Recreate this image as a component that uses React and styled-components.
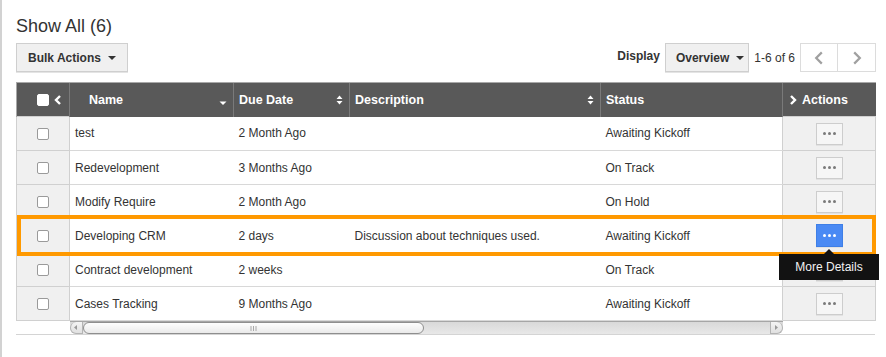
import styled, { createGlobalStyle } from "styled-components";

const GlobalStyle = createGlobalStyle`
  html, body {
    margin: 0;
    padding: 0;
    background: #fff;
  }
  body {
    font-family: "Liberation Sans", Arial, sans-serif;
    color: #333;
  }
`

const Page = styled.div`
  box-sizing: border-box;
  min-height: 357px;
  width: 886px;
  border-left: 2px solid #d2d2d2;
  padding: 16px 10px 0 14px;
`
const Title = styled.h1`
  margin: 0;
  font-size: 18px;
  line-height: 20px;
  font-weight: 400;
  color: #333;
`
const Toolbar = styled.div`
  display: flex;
  align-items: center;
  justify-content: space-between;
  margin-top: 7px;
  height: 29px;
`
const Group = styled.div`
  display: flex;
  align-items: center;
  gap: 5px;
`
const DropButton = styled.button`
  box-sizing: border-box;
  height: 29px;
  display: flex;
  align-items: center;
  gap: 7px;
  padding: 0 ${(p) => p.$pr || 11}px 0 ${(p) => p.$pl || 11}px;
  background: #f0f0f0;
  border: 1px solid #cfcfcf;
  box-shadow: 0 1px 0 #e4e4e4;
  font-family: inherit;
  font-size: 12px;
  font-weight: 700;
  color: #333;
`
const Caret = styled.span`
  width: 0;
  height: 0;
  border-left: 4px solid transparent;
  border-right: 4px solid transparent;
  border-top: 4px solid ${(p) => p.$color || "#333"};
`
const Label = styled.span`
  font-size: 12px;
  font-weight: ${(p) => (p.$bold ? 700 : 400)};
  color: #333;
  margin-top: ${(p) => (p.$up ? -3 : 0)}px;
`
const Pager = styled.div`
  display: flex;
`
const PageButton = styled.button`
  box-sizing: border-box;
  width: 38px;
  height: 29px;
  background: #fff;
  border: 1px solid #dcdcdc;
  border-left-width: ${(p) => (p.$first ? 1 : 0)}px;
  display: flex;
  align-items: center;
  justify-content: center;
  padding: 0;
`

const TableWrap = styled.div`
  position: relative;
  margin-top: 10px;
  width: 859px;
  border-bottom: 1px solid #d4d4d4;
`
const Table = styled.table`
  width: 859px;
  table-layout: fixed;
  border-collapse: collapse;
  font-size: 12px;
`
const Th = styled.th`
  height: 33px;
  padding: 0 6px 0 5px;
  background: #595959;
  border-top: 1px solid #a8a8a8;
  border-left: 1px solid #7a7a7a;
  color: #fff;
  font-weight: 700;
  font-size: 12.5px;
  text-align: left;
  &:first-child { border-left: 1px solid #a8a8a8; }
`
const ThInner = styled.div`
  display: flex;
  align-items: center;
  justify-content: ${(p) => p.$justify || "space-between"};
  gap: ${(p) => p.$gap || 0}px;
  padding-left: ${(p) => p.$pl || 0}px;
`
const Td = styled.td`
  height: 33px;
  padding: 0 5px;
  border-bottom: 1px solid #d8d8d8;
  color: #333;
  white-space: nowrap;
`
const SideTd = styled.td`
  height: 33px;
  padding: 0;
  background: #f0f0f0;
  border: 1px solid #d0d0d0;
  text-align: center;
  position: relative;
`
const CheckBox = styled.span`
  display: inline-block;
  box-sizing: border-box;
  width: 12px;
  height: 12px;
  border: 1px solid ${(p) => (p.$light ? "#fff" : "#9a9a9a")};
  background: #fff;
  border-radius: 2px;
  vertical-align: middle;
`
const ActionButton = styled.span`
  position: relative;
  display: inline-flex;
  box-sizing: border-box;
  align-items: center;
  justify-content: center;
  gap: 2px;
  width: 27px;
  height: ${(p) => (p.$active ? 23 : 22)}px;
  background: ${(p) => (p.$active ? "#4a8af4" : "#f6f6f6")};
  border: 1px solid ${(p) => (p.$active ? "#3f7fe6" : "#cdcdcd")};
  box-shadow: 0 1px 0 #e2e2e2;
  vertical-align: middle;
`
const Dot = styled.i`
  width: 3px;
  height: 3px;
  border-radius: 50%;
  background: ${(p) => (p.$light ? "#fff" : "#7a7a7a")};
`
const Tooltip = styled.span`
  position: absolute;
  z-index: 3;
  top: calc(100% + 8px);
  left: 50%;
  transform: translateX(-50%);
  width: 100px;
  height: 26px;
  background: #121212;
  color: #f2f2f2;
  font-size: 12px;
  display: flex;
  align-items: center;
  justify-content: center;
  &::before {
    content: "";
    position: absolute;
    top: -5px;
    left: 45px;
    border-left: 5px solid transparent;
    border-right: 5px solid transparent;
    border-bottom: 5px solid #121212;
  }
`
const Highlight = styled.div`
  position: absolute;
  z-index: 2;
  pointer-events: none;
  left: 1px;
  top: 133px;
  width: 859px;
  height: 41px;
  box-sizing: border-box;
  border: 4px solid #ff9900;
`
const ScrollTd = styled.td`
  height: 13px;
  padding: 0;
`
const Track = styled.div`
  display: flex;
  align-items: stretch;
  height: 13px;
  box-sizing: border-box;
  background: linear-gradient(#d9d9d9, #e8e8e8);
  border-top: 1px solid #a6a6a6;
  border-radius: 0 0 6px 6px;
`
const ArrowCap = styled.div`
  width: 13px;
  display: flex;
  align-items: center;
  justify-content: center;
  box-sizing: border-box;
  border: 1px solid #b4b4b4;
  border-top: 0;
  border-radius: ${(p) => (p.$right ? "0 6px 6px 0" : "6px 0 0 6px")};
  background: linear-gradient(#f4f4f4, #e0e0e0);
`
const Thumb = styled.div`
  width: 341px;
  box-sizing: border-box;
  border: 1px solid #8e8e8e;
  border-radius: 6px;
  background: linear-gradient(#fdfdfd, #eaeaea);
  display: flex;
  align-items: center;
  justify-content: center;
`
const Spacer = styled.div`
  flex: 1;
`

const Chevron = ({ dir = "right", color = "#fff", size = 10, weight = 2.4 }) => (
  <svg width={size} height={size} viewBox="0 0 10 10">
    <path
      d={dir === "left" ? "M7 1 L3 5 L7 9" : "M3 1 L7 5 L3 9"}
      fill="none"
      stroke={color}
      strokeWidth={weight}
    />
  </svg>
)

const SortBoth = () => (
  <svg width="7" height="10" viewBox="0 0 7 10">
    <path d="M0.5 4 L3.5 0.5 L6.5 4 Z M0.5 6 L3.5 9.5 L6.5 6 Z" fill="#fff" />
  </svg>
)

const SortDown = () => (
  <svg width="8" height="12" viewBox="0 0 8 12">
    <path d="M0.5 7.5 L4 11 L7.5 7.5 Z" fill="#fff" />
  </svg>
)

const Grip = () => (
  <svg width="7" height="5" viewBox="0 0 7 5">
    <path d="M1 0 V5 M3.5 0 V5 M6 0 V5" stroke="#a8a8a8" strokeWidth="1" />
  </svg>
)

const rows = [
  { name: "test", due: "2 Month Ago", desc: "", status: "Awaiting Kickoff" },
  { name: "Redevelopment", due: "3 Months Ago", desc: "", status: "On Track" },
  { name: "Modify Require", due: "2 Month Ago", desc: "", status: "On Hold" },
  { name: "Developing CRM", due: "2 days", desc: "Discussion about techniques used.", status: "Awaiting Kickoff", active: true },
  { name: "Contract development", due: "2 weeks", desc: "", status: "On Track" },
  { name: "Cases Tracking", due: "9 Months Ago", desc: "", status: "Awaiting Kickoff" },
]

const App = () => {
  return (
    <Page>
      <GlobalStyle />
      <Title>Show All (6)</Title>
      <Toolbar>
        <DropButton>
          Bulk Actions <Caret />
        </DropButton>
        <Group>
          <Label $bold $up>Display</Label>
          <DropButton $pl={10} $pr={4}>
            Overview <Caret />
          </DropButton>
          <Label>1-6 of 6</Label>
          <Pager>
            <PageButton $first>
              <Chevron dir="left" color="#a0a0a0" size={14} weight={1.6} />
            </PageButton>
            <PageButton>
              <Chevron color="#a0a0a0" size={14} weight={1.6} />
            </PageButton>
          </Pager>
        </Group>
      </Toolbar>

      <TableWrap>
        <Table>
          <colgroup>
            <col style={{ width: 53 }} />
            <col style={{ width: 164 }} />
            <col style={{ width: 116 }} />
            <col style={{ width: 251 }} />
            <col style={{ width: 182 }} />
            <col style={{ width: 93 }} />
          </colgroup>
          <thead>
            <tr>
              <Th>
                <ThInner $justify="flex-end" $gap={4}>
                  <CheckBox $light />
                  <Chevron dir="left" />
                </ThInner>
              </Th>
              <Th>
                <ThInner $pl={14}>
                  Name <SortDown />
                </ThInner>
              </Th>
              <Th>
                <ThInner>
                  Due Date <SortBoth />
                </ThInner>
              </Th>
              <Th>
                <ThInner>
                  Description <SortBoth />
                </ThInner>
              </Th>
              <Th>Status</Th>
              <Th>
                <ThInner $justify="flex-start" $gap={4}>
                  <Chevron />
                  Actions
                </ThInner>
              </Th>
            </tr>
          </thead>
          <tbody>
            {rows.map((r) => (
              <tr key={r.name}>
                <SideTd>
                  <CheckBox />
                </SideTd>
                <Td>{r.name}</Td>
                <Td>{r.due}</Td>
                <Td>{r.desc}</Td>
                <Td>{r.status}</Td>
                <SideTd>
                  <ActionButton $active={r.active}>
                    <Dot $light={r.active} />
                    <Dot $light={r.active} />
                    <Dot $light={r.active} />
                    {r.active && <Tooltip>More Details</Tooltip>}
                  </ActionButton>
                </SideTd>
              </tr>
            ))}
            <tr>
              <ScrollTd />
              <ScrollTd colSpan={4}>
                <Track>
                  <ArrowCap>
                    <svg width="4" height="5" viewBox="0 0 4 5">
                      <path d="M3 0 L0 2.5 L3 5 Z" fill="#999" />
                    </svg>
                  </ArrowCap>
                  <Thumb>
                    <Grip />
                  </Thumb>
                  <Spacer />
                  <ArrowCap $right>
                    <svg width="4" height="5" viewBox="0 0 4 5">
                      <path d="M1 0 L4 2.5 L1 5 Z" fill="#999" />
                    </svg>
                  </ArrowCap>
                </Track>
              </ScrollTd>
              <ScrollTd />
            </tr>
          </tbody>
        </Table>
        <Highlight />
      </TableWrap>
    </Page>
  )
}

export default App;
